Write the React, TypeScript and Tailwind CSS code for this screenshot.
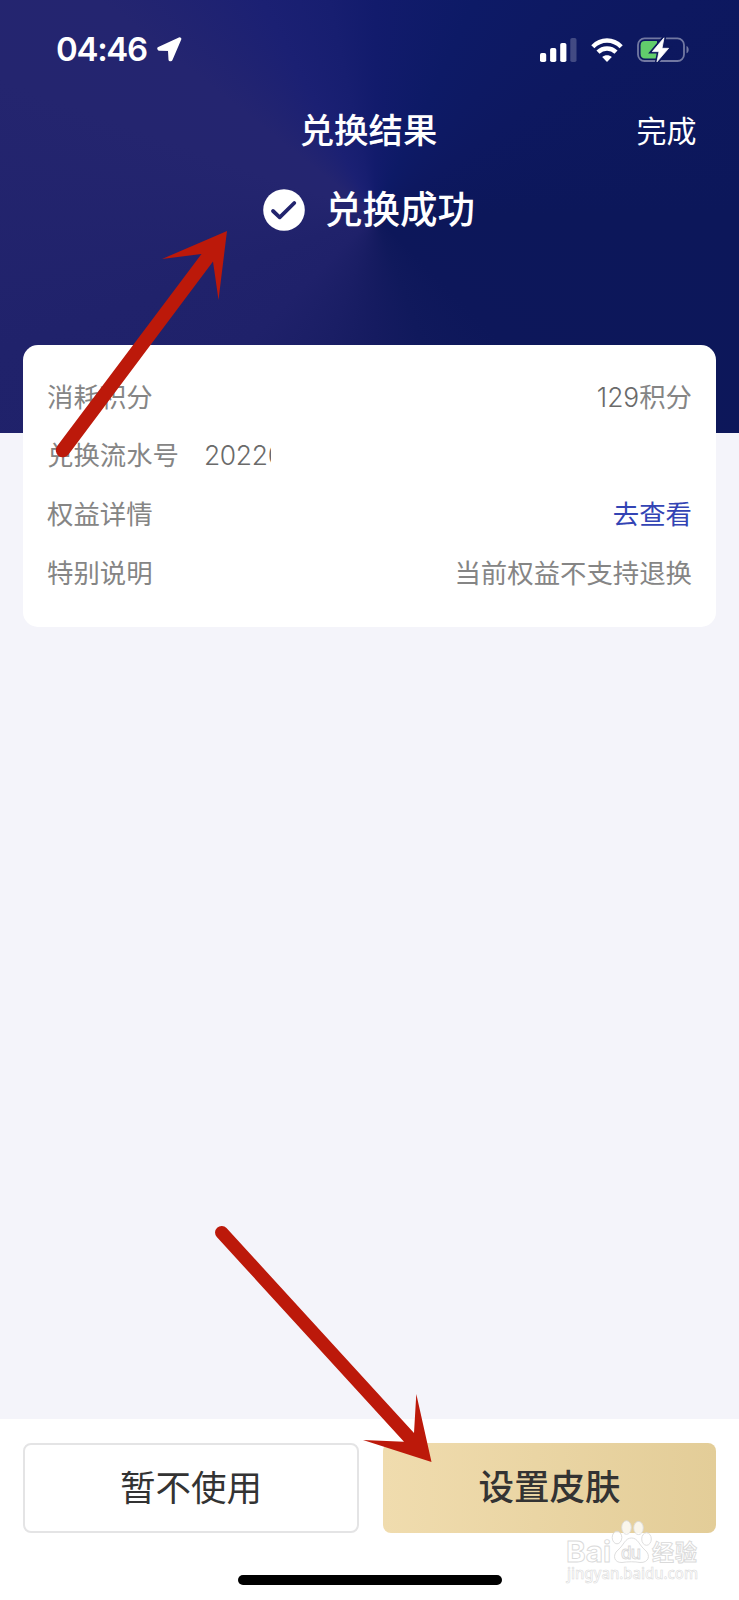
import React from "react";

interface Row {
  label: string;
  amount?: string;
  value?: string;
  serial?: string;
  link?: boolean;
}

const rows: Row[] = [
  { label: "消耗积分", amount: "129", value: "积分" },
  { label: "兑换流水号", serial: "20220" },
  { label: "权益详情", value: "去查看", link: true },
  { label: "特别说明", value: "当前权益不支持退换" }
];

function StatusBar() {
  return (
    <div className="flex h-[98px] items-center justify-between pl-[56px] pr-[49px]">
      <div className="flex items-center gap-[9px]">
        <span className="w-[92px] whitespace-nowrap pt-px text-[33px] font-semibold leading-none tracking-[-1.3px]">04:46</span>
        <svg className="h-[26px] w-[26px]" viewBox="0 0 26 26" fill="currentColor" stroke="currentColor" strokeWidth="3.4" strokeLinejoin="round">
          <path d="M22.6 3 L2 12.6 L2.2 13 L12.6 13.2 L13.2 23.6 L13.8 23.6 Z" />
        </svg>
      </div>
      <div className="flex items-center pt-px">
        <svg className="h-6 w-[37px]" viewBox="0 0 37 24" fill="currentColor">
          <rect x="0" y="15" width="6.2" height="9" rx="1.8" />
          <rect x="10.1" y="10" width="6.2" height="14" rx="1.8" />
          <rect x="20.2" y="5" width="6.2" height="19" rx="1.8" />
          <rect x="30.3" y="0" width="6.2" height="24" rx="1.8" opacity="0.22" />
        </svg>
        <svg className="ml-[14px] h-6 w-8" viewBox="0 0 32 24" fill="none" stroke="currentColor" strokeWidth="4.4">
          <path d="M1.8 8.7 C10 0.5 22 0.5 30.2 8.7" />
          <path d="M7 14.1 C12 9.2 20 9.2 25 14.1" />
          <path d="M16 24 L11.2 19.1 C13.8 16.5 18.2 16.5 20.8 19.1 Z" fill="currentColor" stroke="none" />
        </svg>
        <svg className="ml-[14px] h-[26px] w-[53px]" viewBox="0 0 53 26" fill="none">
          <rect x="1" y="1.4" width="46" height="22.6" rx="6.5" stroke="#fff" strokeOpacity="0.42" strokeWidth="1.8" />
          <path d="M49.5 8.9 C52.4 10.1 52.4 15.1 49.5 16.3 Z" fill="#fff" fillOpacity="0.42" />
          <path d="M8 3.9 H20 V21.5 H8 Q3.6 21.5 3.6 17.1 V8.3 Q3.6 3.9 8 3.9 Z" fill="#62cd6c" />
          <path d="M27 0.8 L15.4 14.6 H22 L20 24.8 L31.6 11.3 H25 Z" fill="#fff" stroke="#0d185d" strokeWidth="4" />
          <path d="M27 0.8 L15.4 14.6 H22 L20 24.8 L31.6 11.3 H25 Z" fill="#fff" stroke="#fff" strokeWidth="0.8" strokeLinejoin="round" />
        </svg>
      </div>
    </div>
  );
}

function DetailCard() {
  return (
    <div className="mx-[23px] -mt-[89px] h-[282px] rounded-[15px] bg-white px-6 pt-[22.5px] text-[26.4px] text-[#858585]">
      {rows.map((row) => (
        <div key={row.label} className="flex h-[58.7px] items-center justify-between whitespace-nowrap leading-none">
          <div className="flex items-center">
            <span>{row.label}</span>
            {row.serial && (
              <span className="ml-[25px] w-[67px] overflow-hidden py-1 font-light tracking-[-0.3px] text-[#6a6a6a]">{row.serial}</span>
            )}
          </div>
          {row.value && (
            <span className={row.link ? "text-[#3344b4]" : ""}>
              {row.amount && <span className="font-light text-[#6a6a6a]">{row.amount}</span>}
              {row.value}
            </span>
          )}
        </div>
      ))}
    </div>
  );
}

function Watermark() {
  return (
    <svg className="absolute left-[560px] top-[1512px] h-[80px] w-[150px] overflow-visible" viewBox="0 0 150 80" fill="#fff" stroke="#dadada" strokeWidth="0.9">
      <text x="6" y="50" fontFamily="Inter" fontSize="29" fontWeight="700" textLength="45" lengthAdjust="spacingAndGlyphs">Bai</text>
      <g fillOpacity="0.8">
        <ellipse cx="57" cy="25.5" rx="4.8" ry="6.3" />
        <ellipse cx="66.5" cy="15.5" rx="4.8" ry="6.8" />
        <ellipse cx="78.5" cy="16" rx="4.8" ry="6.6" />
        <ellipse cx="86.5" cy="27" rx="4.8" ry="6.3" />
        <path d="M71.5 26 C65 26 64 33 58 38 C52 43 54 51 62 50.5 C68 49.5 75 49.5 80 50.5 C89 51 91 43 85 38 C79 33 78 26 71.5 26 Z" />
      </g>
      <text x="61" y="47" fontFamily="Inter" fontSize="17" fontWeight="500" textLength="20">du</text>
      <text x="92" y="48" fontFamily="Noto Sans CJK SC" fontSize="22" fontWeight="700" textLength="45">经验</text>
      <text x="7" y="67" fontFamily="Noto Sans" fontSize="16" fontWeight="500" strokeWidth="0.6" textLength="131" lengthAdjust="spacingAndGlyphs">jingyan.baidu.com</text>
    </svg>
  );
}

function Arrows() {
  return (
    <svg className="pointer-events-none absolute left-0 top-0 h-[1600px] w-[739px]" viewBox="0 0 739 1600" fill="#bc190a">
      <path d="M227 231 L162 259 L201.5 254 L57.2 446 A7 7 0 0 0 68.5 454.5 L213 261.5 L218.5 300 Z" />
      <path d="M431.5 1462 L416.3 1394 L414 1433 L226.5 1228 A6.6 6.6 0 0 0 216.8 1237 L404 1441.7 L363 1440 Z" />
    </svg>
  );
}

export default function App() {
  return (
    <div className="relative flex h-[1600px] w-[739px] flex-col overflow-hidden bg-[#f4f4fa] font-[Inter,'Noto_Sans_CJK_SC',sans-serif]">
      {/* Header */}
      <header className="h-[433px] shrink-0 bg-[conic-gradient(from_0deg_at_375px_215px,#121b6c_0deg,#0d1a66_25deg,#0d1860_55deg,#0c175a_90deg,#0d175a_135deg,#10195c_160deg,#151b60_180deg,#1a1e65_200deg,#1f216a_225deg,#20226b_250deg,#24256f_290deg,#242570_308deg,#1b2073_332deg,#171e70_348deg,#121b6c_360deg)] text-white">
        <StatusBar />
        <div className="grid h-[66px] grid-cols-3 items-center leading-none">
          <span className="col-start-2 pr-0.5 pt-px text-center text-[34.4px] font-medium">兑换结果</span>
          <span className="pr-[42.5px] text-right text-[30px]">完成</span>
        </div>
        <div className="flex h-[92px] items-center justify-center gap-5 pr-px leading-none">
          <svg className="h-[42px] w-[42px]" viewBox="0 0 42 42">
            <circle cx="21" cy="21" r="20.8" fill="#fff" />
            <path d="M10 22 L16.7 28.3 L31.3 14" fill="none" stroke="#22246e" strokeWidth="3.8" strokeLinecap="round" strokeLinejoin="round" />
          </svg>
          <span className="text-[37.5px] font-medium">兑换成功</span>
        </div>
      </header>

      <div className="mt-px">
        <DetailCard />
      </div>

      {/* Bottom actions */}
      <footer className="mt-auto flex h-[181px] shrink-0 flex-col items-center bg-white px-[23px] pt-6 text-[35.5px] leading-none text-[#333]">
        <div className="flex w-full gap-6">
          <button className="h-[90px] w-[336px] rounded-lg border-2 border-[#e4e4e5] pt-[2px]">暂不使用</button>
          <button className="h-[90px] flex-1 rounded-lg bg-linear-to-r from-[#f0dcae] to-[#e3cd98] font-medium">设置皮肤</button>
        </div>
        <div className="mt-[42px] h-[10px] w-[264px] rounded-full bg-black" />
      </footer>

      <Watermark />
      <Arrows />
    </div>
  );
}
